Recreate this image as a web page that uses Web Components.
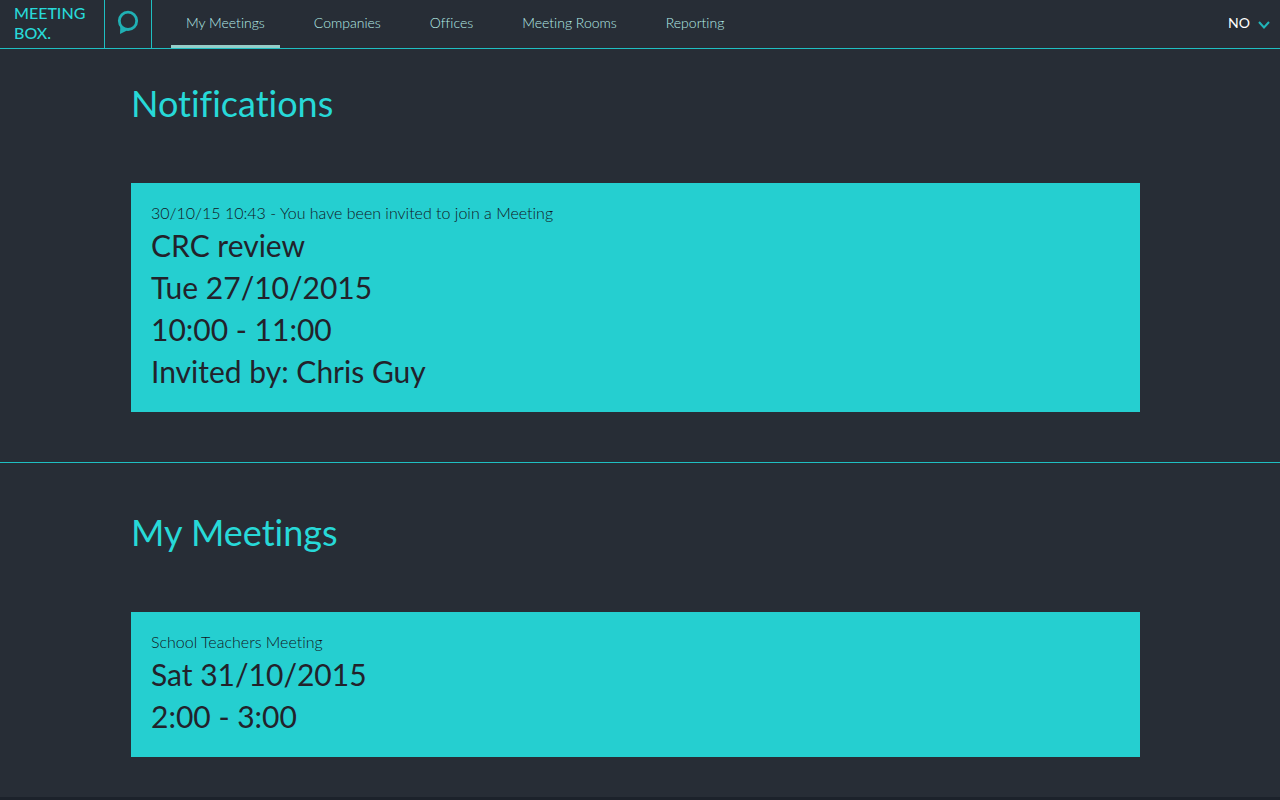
<!DOCTYPE html>
<html lang="en">
<head>
<meta charset="utf-8">
<meta name="viewport" content="width=device-width, initial-scale=1">
<title>Meeting Box</title>
<style>
    :root {
        --accent: #25cfd0;
        --title: #27d9d8;
        --line: #1fbfc2;
        --pale: #96cdc9;
        --link: #b4ebe6;
        --dark: #272d36;
        --ink: #22222b;
        --note: #12161e;
    }

    body {
        margin: 0;
        min-height: 100vh;
        display: flex;
        flex-direction: column;
        background: var(--dark);
        font-family: Lato, "Liberation Sans", sans-serif;
        font-variant-ligatures: none;
    }
</style>
</head>
<body>
<meeting-header>
    <nav-tab href="#my-meetings" active>My Meetings</nav-tab>
    <nav-tab href="#companies">Companies</nav-tab>
    <nav-tab href="#offices">Offices</nav-tab>
    <nav-tab href="#rooms">Meeting Rooms</nav-tab>
    <nav-tab href="#reporting">Reporting</nav-tab>
    <user-menu slot="user" label="NO"></user-menu>
</meeting-header>
<main>
    <page-section heading="Notifications">
        <meeting-card note="30/10/15 10:43 - You have been invited to join a Meeting">
            <div>CRC review</div>
            <div>Tue 27/10/2015</div>
            <div>10:00 - 11:00</div>
            <div>Invited by: Chris Guy</div>
        </meeting-card>
    </page-section>
    <page-section heading="My Meetings" divided>
        <meeting-card note="School Teachers Meeting">
            <div>Sat 31/10/2015</div>
            <div>2:00 - 3:00</div>
        </meeting-card>
    </page-section>
</main>
<page-footer></page-footer>

<script>
class MeetingHeader extends HTMLElement {
    constructor() {
        super();
        this.attachShadow({ mode: 'open' });
        this.shadowRoot.innerHTML = /*html*/`
            <style>
                :host {
                    display: block;
                }

                header {
                    display: flex;
                    height: 48px;
                    border-bottom: 1px solid var(--line);
                }

                .brand {
                    box-sizing: border-box;
                    width: 104px;
                    padding: 3px 14px;
                    color: var(--title);
                    font-size: 16px;
                    font-weight: 500;
                    line-height: 20px;
                    text-decoration: none;
                }

                .search {
                    box-sizing: border-box;
                    width: 48px;
                    display: flex;
                    align-items: center;
                    justify-content: center;
                    padding: 0 0 4px;
                    border: solid var(--line);
                    border-width: 0 1px;
                    background: none;
                    cursor: pointer;
                }

                svg {
                    display: block;
                }

                nav {
                    display: flex;
                    gap: 19px;
                    margin-left: 19px;
                }

                ::slotted([slot=user]) {
                    margin-left: auto;
                }
            </style>
            <header>
                <a class="brand" href="#home">MEETING<br>BOX.</a>
                <button class="search" type="button" aria-label="Messages">
                    <svg width="22" height="24" viewBox="0 0 22 24">
                        <circle cx="11" cy="10.8" r="8.7" fill="none" stroke="#20b0b4" stroke-width="2.8"/>
                        <path d="M3.4 15L3 24L10 20.6L6 17.6Z" fill="#20b0b4"/>
                    </svg>
                </button>
                <nav><slot></slot></nav>
                <slot name="user"></slot>
            </header>
        `;
    }
}

class NavTab extends HTMLElement {
    constructor() {
        super();
        this.attachShadow({ mode: 'open' });
        this.shadowRoot.innerHTML = /*html*/`
            <style>
                :host {
                    display: flex;
                }

                a {
                    padding: 0 15px;
                    border-bottom: 3px solid transparent;
                    color: var(--link);
                    font-size: 14px;
                    font-weight: 300;
                    line-height: 45px;
                    text-decoration: none;
                    white-space: nowrap;
                }

                :host([active]) a {
                    border-bottom-color: var(--pale);
                }
            </style>
            <a><slot></slot></a>
        `;
    }

    connectedCallback() {
        this.shadowRoot.querySelector('a').setAttribute('href', this.getAttribute('href'));
    }
}

class UserMenu extends HTMLElement {
    constructor() {
        super();
        this.attachShadow({ mode: 'open' });
        this.shadowRoot.innerHTML = /*html*/`
            <style>
                :host {
                    display: flex;
                }

                button {
                    display: flex;
                    align-items: center;
                    gap: 8px;
                    padding: 0 10px 3px;
                    border: 0;
                    background: none;
                    color: #fff;
                    font: inherit;
                    font-size: 14px;
                    cursor: pointer;
                }

                svg {
                    margin-top: 4px;
                }
            </style>
            <button type="button" aria-haspopup="true">
                <span></span>
                <svg width="12" height="8" viewBox="0 0 12 8" fill="none" stroke="#20b5b9" stroke-width="2">
                    <path d="M1 1l5 5.5L11 1"/>
                </svg>
            </button>
        `;
    }

    connectedCallback() {
        this.shadowRoot.querySelector('span').textContent = this.getAttribute('label');
    }
}

class PageSection extends HTMLElement {
    constructor() {
        super();
        this.attachShadow({ mode: 'open' });
        this.shadowRoot.innerHTML = /*html*/`
            <style>
                :host {
                    display: block;
                    padding: 29px 140px 50px 131px;
                }

                :host([divided]) {
                    padding-top: 44px;
                    padding-bottom: 40px;
                    border-top: 1px solid var(--line);
                }

                h1 {
                    margin: 0 0 55px;
                    color: var(--title);
                    font-size: 36px;
                    font-weight: 400;
                    line-height: 50px;
                }
            </style>
            <h1></h1>
            <slot></slot>
        `;
    }

    connectedCallback() {
        this.shadowRoot.querySelector('h1').textContent = this.getAttribute('heading');
    }
}

class MeetingCard extends HTMLElement {
    constructor() {
        super();
        this.attachShadow({ mode: 'open' });
        this.shadowRoot.innerHTML = /*html*/`
            <style>
                :host {
                    display: block;
                    padding: 20px;
                    background: var(--accent);
                    color: var(--ink);
                    font-size: 30px;
                    line-height: 42px;
                }

                p {
                    margin: 0 0 1px;
                    color: var(--note);
                    font-size: 16px;
                    font-weight: 300;
                    line-height: 20px;
                }
            </style>
            <p></p>
            <slot></slot>
        `;
    }

    connectedCallback() {
        this.shadowRoot.querySelector('p').textContent = this.getAttribute('note');
    }
}

class PageFooter extends HTMLElement {
    constructor() {
        super();
        this.attachShadow({ mode: 'open' });
        this.shadowRoot.innerHTML = /*html*/`
            <style>
                :host {
                    display: block;
                    flex: 1;
                    background: #1c222b;
                }
            </style>
        `;
    }
}

customElements.define('meeting-header', MeetingHeader);
customElements.define('nav-tab', NavTab);
customElements.define('user-menu', UserMenu);
customElements.define('page-section', PageSection);
customElements.define('meeting-card', MeetingCard);
customElements.define('page-footer', PageFooter);
</script>
</body>
</html>
